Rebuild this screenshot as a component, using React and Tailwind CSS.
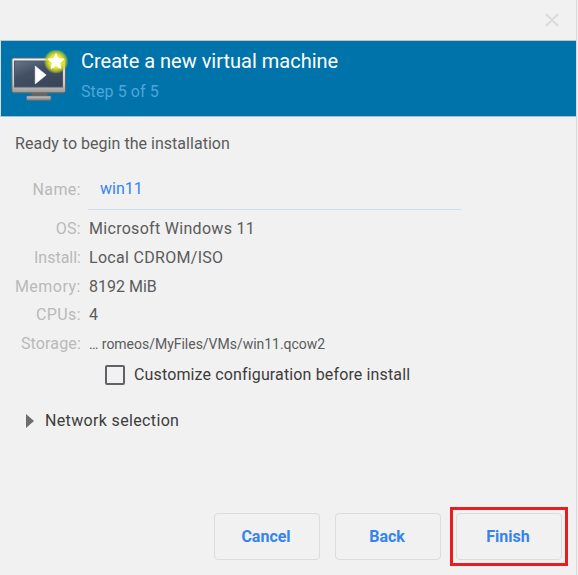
const details = [
  { label: 'OS:', value: 'Microsoft Windows 11', labelStyle: 'tracking-[0.3px]', valueStyle: 'tracking-[0.3px]' },
  { label: 'Install:', value: 'Local CDROM/ISO', labelStyle: '', valueStyle: 'tracking-[0.3px]' },
  { label: 'Memory:', value: '8192 MiB', labelStyle: 'tracking-[0.5px]', valueStyle: '' },
  { label: 'CPUs:', value: '4', labelStyle: 'tracking-[0.4px]', valueStyle: '' },
  { label: 'Storage:', value: '… romeos/MyFiles/VMs/win11.qcow2', labelStyle: 'tracking-[0.15px]', valueStyle: 'text-[14px] tracking-[-0.02px]' },
];

function MonitorIcon() {
  return (
    <svg className="ml-[9px] mt-[9px] h-[56px] w-[60px] shrink-0" viewBox="0 0 60 56">
      <defs>
        <linearGradient id="frame" x1="0" y1="0" x2="0" y2="1">
          <stop offset="0" stopColor="#f2f2f2" />
          <stop offset="0.75" stopColor="#c9c7c7" />
          <stop offset="1" stopColor="#999898" />
        </linearGradient>
        <linearGradient id="screen" x1="0" y1="0" x2="0.7" y2="1">
          <stop offset="0" stopColor="#68778b" />
          <stop offset="0.45" stopColor="#435064" />
          <stop offset="1" stopColor="#39465a" />
        </linearGradient>
        <linearGradient id="stand" x1="0" y1="0" x2="0" y2="1">
          <stop offset="0" stopColor="#d0cfcf" />
          <stop offset="1" stopColor="#777676" />
        </linearGradient>
        <radialGradient id="glow">
          <stop offset="0" stopColor="#f7f36a" />
          <stop offset="0.55" stopColor="#e3e51c" />
          <stop offset="0.8" stopColor="#c5d128" stopOpacity="0.7" />
          <stop offset="1" stopColor="#9fc340" stopOpacity="0" />
        </radialGradient>
      </defs>
      <rect x="21.5" y="42" width="16" height="7" fill="#686767" />
      <rect x="16.5" y="46" width="24.5" height="4.5" rx="0.8" fill="url(#stand)" stroke="#696969" strokeWidth="0.7" />
      <rect x="1.9" y="8" width="53.6" height="34.8" rx="1.8" fill="url(#frame)" stroke="#656565" strokeWidth="1" />
      <rect x="4.5" y="11" width="48" height="26" fill="url(#screen)" stroke="#505963" strokeWidth="1" />
      <path d="M25.2 16 36.2 25 25.2 34Z" fill="#fff" stroke="#fff" strokeWidth="0.5" strokeLinejoin="round" />
      <circle cx="46" cy="11.5" r="12.5" fill="url(#glow)" />
      <path d="M46 3.5 48.4 8.5 54 9.1 49.8 12.9 51 18.5 46 15.8 41 18.5 42.2 12.9 38 9.1 43.6 8.5Z" fill="#fff" stroke="#fff" strokeWidth="0.8" strokeLinejoin="round" />
    </svg>
  );
}

function DialogButton({ children }) {
  return (
    <button className="h-[47px] w-[106px] rounded-[4px] border border-[#dadce0] pr-[2px] text-[16px] font-bold text-[#3584ee]">
      {children}
    </button>
  );
}

export default function App() {
  return (
    <div className="h-[575px] w-[578px] overflow-hidden bg-[#f1f1f1] pr-px font-['Roboto',sans-serif] text-[16px] text-[#5b5b5b]">
      <div className="flex h-full flex-col border-r border-[#dadada]">
        <header className="flex h-[40px] shrink-0 items-center justify-end pr-[17px]">
          <svg className="h-[14px] w-[14px]" viewBox="0 0 14 14" fill="none" stroke="#dcdcdc" strokeWidth="2">
            <path d="M1 1 13 13M13 1 1 13" />
          </svg>
        </header>

        <section className="flex h-[77px] shrink-0 border-y border-l border-b-[#9fc1d3] border-l-[#d5dde1] border-t-[#b4c9d3] bg-[#0073aa]">
          <MonitorIcon />
          <div className="ml-[11px] pt-[8px]">
            <h1 className="text-[20px] leading-[24px] text-white">Create a new virtual machine</h1>
            <p className="mt-[9px] leading-[20px] tracking-[0.1px] text-[#4fa5dc]">Step 5 of 5</p>
          </div>
        </section>

        <main className="flex min-h-0 flex-1 flex-col">
          <p className="ml-[15px] mt-[17px] leading-[20px] tracking-[0.03px]">Ready to begin the installation</p>

          <div className="mt-[15px] flex h-[41px]">
            <span className="w-[81px] pt-[11px] text-right leading-[20px] tracking-[0.4px] text-[#b9b9b9]">Name:</span>
            <div className="ml-[7px] w-[373px] border-b border-[#d0dded] pl-[12px] pt-[10px] leading-[20px] text-[#3584ee]">win11</div>
          </div>

          <dl className="mt-[5px]">
            {details.map(({ label, value, labelStyle, valueStyle }) => (
              <div key={label} className="flex h-[28.7px] items-center">
                <dt className={`w-[81px] text-right text-[#b9b9b9] ${labelStyle}`}>{label}</dt>
                <dd className={`ml-[8px] ${valueStyle}`}>{value}</dd>
              </div>
            ))}
          </dl>

          <label className="ml-[105px] mt-[6.5px] flex h-[20px] items-center gap-[9px] tracking-[0.14px] text-[#3c3c3c]">
            <span className="h-[20px] w-[20px] rounded-[2px] border-2 border-[#5f6368]" />
            Customize configuration before install
          </label>

          <div className="ml-[26px] mt-[26px] flex h-[20px] items-center gap-[11px] tracking-[0.35px] text-[#3c3c3c]">
            <svg className="h-[14px] w-[8px]" viewBox="0 0 8 14">
              <path d="M0 0 8 7 0 14Z" fill="#6d6d6d" />
            </svg>
            Network selection
          </div>

          <footer className="mt-auto flex items-center justify-end pb-[9px] pr-[8px]">
            <DialogButton>Cancel</DialogButton>
            <span className="w-[15px]" />
            <DialogButton>Back</DialogButton>
            <div className="ml-[9px] border-[3px] border-[#e91c20] p-[3px]">
              <DialogButton>Finish</DialogButton>
            </div>
          </footer>
        </main>
      </div>
    </div>
  );
}
